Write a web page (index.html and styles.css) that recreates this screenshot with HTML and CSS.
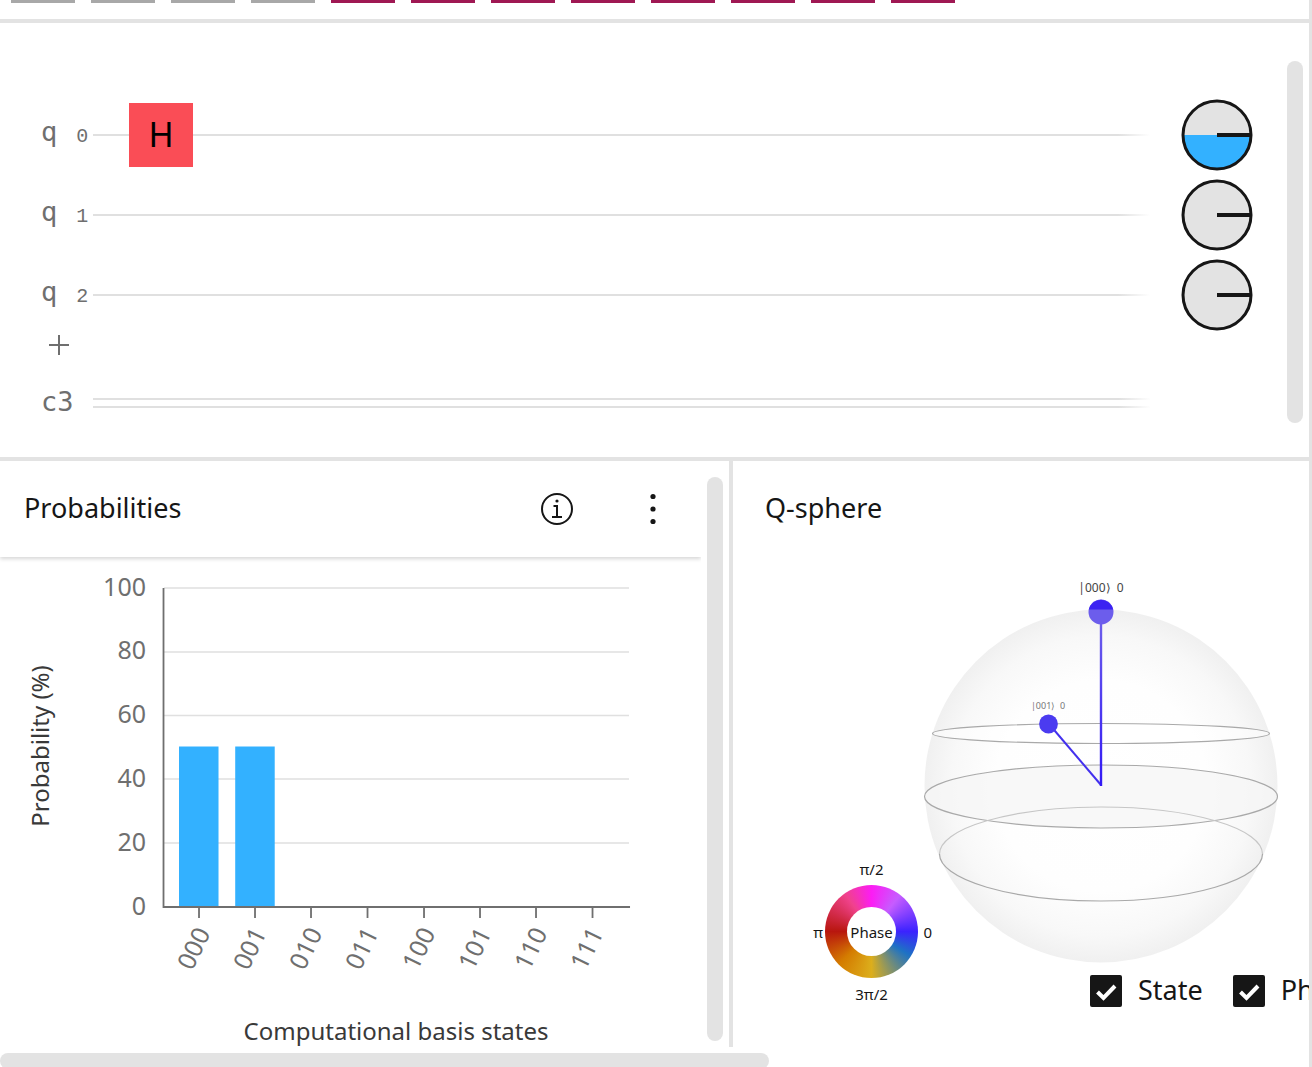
FILE: index.html
```html
<!DOCTYPE html>
<html lang="en">
<head>
<meta charset="utf-8">
<title>Quantum Composer</title>
<link rel="stylesheet" href="styles.css">
</head>
<body>
<div class="app">
  <div class="palette">
    <i class="chip"></i><i class="chip"></i><i class="chip"></i><i class="chip"></i>
    <i class="chip chip-alt"></i><i class="chip chip-alt"></i><i class="chip chip-alt"></i><i class="chip chip-alt"></i>
    <i class="chip chip-alt"></i><i class="chip chip-alt"></i><i class="chip chip-alt"></i><i class="chip chip-alt"></i>
  </div>

  <section class="circuit" aria-label="Circuit">
    <div class="registers">
      <div class="row">
        <div class="label"><span>q</span><span class="index">0</span></div>
        <div class="wire"><button class="gate" type="button">H</button></div>
        <svg class="dial" viewBox="0 0 72 72" aria-hidden="true">
          <circle cx="36" cy="36" r="34" fill="#e3e3e3"/>
          <path d="M2 36a34 34 0 0 0 68 0z" fill="#33b1ff"/>
          <circle cx="36" cy="36" r="34" fill="none" stroke="#161616" stroke-width="3"/>
          <path d="M36 36h34" stroke="#161616" stroke-width="4"/>
        </svg>
      </div>
      <div class="row">
        <div class="label"><span>q</span><span class="index">1</span></div>
        <div class="wire"></div>
        <svg class="dial" viewBox="0 0 72 72" aria-hidden="true">
          <circle cx="36" cy="36" r="34" fill="#e3e3e3" stroke="#161616" stroke-width="3"/>
          <path d="M36 36h34" stroke="#161616" stroke-width="4"/>
        </svg>
      </div>
      <div class="row">
        <div class="label"><span>q</span><span class="index">2</span></div>
        <div class="wire"></div>
        <svg class="dial" viewBox="0 0 72 72" aria-hidden="true">
          <circle cx="36" cy="36" r="34" fill="#e3e3e3" stroke="#161616" stroke-width="3"/>
          <path d="M36 36h34" stroke="#161616" stroke-width="4"/>
        </svg>
      </div>
      <button class="add" type="button" aria-label="Add qubit">
        <svg width="20" height="20" viewBox="0 0 20 20"><path d="M10 0v20M0 10h20" stroke="#6f6f6f" stroke-width="2"/></svg>
      </button>
      <div class="row">
        <div class="label">c3</div>
        <div class="wire wire-double"></div>
        <div class="dial"></div>
      </div>
    </div>
    <div class="scrollbar"></div>
  </section>

  <div class="panels">
    <section class="panel panel-left">
      <div class="view">
        <header class="panel-head panel-head-raised">
          <h2>Probabilities</h2>
          <button class="icon-button" type="button" aria-label="Information">
            <svg width="32" height="32" viewBox="0 0 32 32">
              <circle cx="16" cy="16" r="15" fill="none" stroke="#161616" stroke-width="2"/>
              <circle cx="16" cy="8" r="1.6" fill="#161616"/>
              <path d="M12.500 13h3.500v11M11 24h10" fill="none" stroke="#161616" stroke-width="2"/>
            </svg>
          </button>
          <button class="icon-button" type="button" aria-label="More options">
            <svg width="32" height="32" viewBox="0 0 32 32" fill="#161616">
              <circle cx="16" cy="3.500" r="2.600"/><circle cx="16" cy="16" r="2.600"/><circle cx="16" cy="28.500" r="2.600"/>
            </svg>
          </button>
        </header>
        <svg class="chart" viewBox="0 0 701 490" role="img" aria-label="Probability of each computational basis state">
          <path d="M164 31h465M164 95h465M164 158.500h465M164 222h465M164 286h465" stroke="#e0e0e0" stroke-width="1.500"/>
          <g fill="#33b1ff">
            <rect x="179" y="189.500" width="39.500" height="160"/>
            <rect x="235.200" y="189.500" width="39.500" height="160"/>
          </g>
          <path d="M163.500 31v319H630M199 350v11M255 350v11M311 350v11M367.500 350v11M424 350v11M480 350v11M536 350v11M592.500 350v11" fill="none" stroke="#6f6f6f" stroke-width="1.800"/>
          <g class="tick-text" text-anchor="end">
            <text x="146" y="39">100</text>
            <text x="146" y="102">80</text>
            <text x="146" y="166">60</text>
            <text x="146" y="230">40</text>
            <text x="146" y="294">20</text>
            <text x="146" y="358">0</text>
            <text transform="translate(211 376) rotate(-64)">000</text>
            <text transform="translate(267 376) rotate(-64)">001</text>
            <text transform="translate(323 376) rotate(-64)">010</text>
            <text transform="translate(379 376) rotate(-64)">011</text>
            <text transform="translate(436 376) rotate(-64)">100</text>
            <text transform="translate(492 376) rotate(-64)">101</text>
            <text transform="translate(548 376) rotate(-64)">110</text>
            <text transform="translate(604 376) rotate(-64)">111</text>
          </g>
          <g class="axis-text" text-anchor="middle">
            <text transform="translate(49 189) rotate(-90)">Probability (%)</text>
            <text x="396" y="483">Computational basis states</text>
          </g>
        </svg>
      </div>
      <div class="scrollbar"></div>
    </section>

    <section class="panel panel-right">
      <header class="panel-head">
        <h2>Q-sphere</h2>
      </header>
      <div class="stage">
        <svg class="sphere" width="576" height="418" viewBox="0 0 576 418" role="img" aria-label="Q-sphere">
          <defs>
            <radialGradient id="shade">
              <stop offset="0" stop-color="#fff"/>
              <stop offset=".6" stop-color="#fefefe"/>
              <stop offset=".85" stop-color="#f8f8f8"/>
              <stop offset="1" stop-color="#f0f0f0"/>
            </radialGradient>
            <linearGradient id="stem" x1="0" y1="55" x2="0" y2="229" gradientUnits="userSpaceOnUse">
              <stop offset="0" stop-color="#7062ea"/>
              <stop offset="1" stop-color="#3219f5"/>
            </linearGradient>
          </defs>
          <circle cx="368" cy="229" r="176.500" fill="url(#shade)"/>
          <g stroke-width="1.200" stroke="#a9a9a9" fill="none">
            <ellipse cx="368" cy="239.500" rx="176.500" ry="31.500" fill="#f5f5f5" fill-opacity=".75"/>
            <path d="M206.500 297a161.500 47 0 0 1 323 0" stroke="#c6c6c6"/>
            <path d="M206.500 297a161.500 47 0 0 0 323 0"/>
            <ellipse cx="368" cy="176.500" rx="168.500" ry="10" fill="#fff" fill-opacity=".5"/>
          </g>
          <path d="M316 167l52 61" stroke="#4330ee" stroke-width="2"/>
          <path d="M366.800 55h2.400v174h-2.400z" fill="url(#stem)"/>
          <circle cx="368" cy="55" r="12.500" fill="#6c5dec"/>
          <path d="M355.800 52.500a12.500 12.500 0 0 1 24.400 0z" fill="#3b22f2"/>
          <circle cx="315.500" cy="167" r="9.400" fill="#4b3bf0"/>
          <g text-anchor="middle">
            <text class="ket" x="368" y="35">|000⟩&#160; 0</text>
            <text class="ket ket-far" x="315" y="152">|001⟩&#160; 0</text>
          </g>
        </svg>
        <div class="phase">
          <span class="phase-top">π/2</span>
          <span class="phase-left">π</span>
          <span class="phase-ring"><span class="phase-hole">Phase</span></span>
          <span class="phase-right">0</span>
          <span class="phase-bottom">3π/2</span>
        </div>
      </div>
      <div class="options">
        <label><input type="checkbox" checked>State</label>
        <label><input type="checkbox" checked>Phase angle</label>
      </div>
    </section>
  </div>

  <div class="track"><div class="thumb"></div></div>
</div>
</body>
</html>
```
FILE: styles.css
```css
* { box-sizing: border-box; }

body {
  margin: 0;
  background: #fff;
  color: #161616;
  font-family: "Noto Sans", "Open Sans", sans-serif;
  font-size: 27px;
}

button {
  border: 0;
  padding: 0;
  background: none;
  color: inherit;
  font: inherit;
}

h2 {
  margin: 0;
  font-size: 27px;
  font-weight: 400;
}

.app {
  display: flex;
  flex-direction: column;
  height: 100vh;
  overflow: hidden;
  border-right: 3px solid #e3e3e3;
}

/* Gate palette strip */
.palette {
  display: flex;
  gap: 16px;
  height: 19px;
  padding-left: 11px;
  flex: none;
}
.chip {
  flex: none;
  width: 64px;
  height: 3px;
  background: #a8a8a8;
}
.chip-alt { background: #9f1853; }

.scrollbar {
  flex: none;
  width: 16px;
  border-radius: 8px;
  background: #e3e3e3;
}

/* Circuit */
.circuit {
  display: flex;
  flex: none;
  border-top: 4px solid #e3e3e3;
  border-bottom: 4px solid #e3e3e3;
}
.circuit .scrollbar { margin: 38px 6px 34px 0; }
.registers {
  flex: 1;
  min-width: 0;
  padding: 72px 34px 14px 0;
}
.row {
  display: flex;
  align-items: center;
  height: 80px;
}
.label {
  display: flex;
  flex: none;
  gap: 19px;
  width: 93px;
  padding: 0 0 2px 41px;
  color: #6f6f6f;
  font-family: "DejaVu Sans Mono", monospace;
  font-size: 27px;
  line-height: 32px;
}
.index {
  padding-top: 5px;
  font-family: "Liberation Mono", monospace;
  font-size: 20px;
}
.wire {
  display: flex;
  flex: 1;
  align-items: center;
  height: 64px;
  padding-left: 36px;
  background: linear-gradient(90deg, #e0e0e0, #e0e0e0 calc(100% - 32px), #fff) center / 100% 2px no-repeat;
}
.wire-double {
  height: 10px;
  border: 2px solid;
  border-width: 2px 0;
  border-image: linear-gradient(90deg, #e0e0e0, #e0e0e0 calc(100% - 32px), #fff) 1;
  border-image-width: 2px 0;
  background: none;
}
.dial {
  flex: none;
  width: 72px;
  height: 72px;
  margin-left: 31px;
}
.gate {
  width: 64px;
  height: 64px;
  padding-bottom: 2px;
  background: #fa4d56;
  color: #000;
  font-size: 34px;
  line-height: 62px;
}
.add {
  display: block;
  height: 20px;
  margin: 0 0 8px 49px;
}
.add svg { display: block; }

/* Result panels */
.panels {
  display: grid;
  grid-template-columns: 56% minmax(0, 1fr);
  flex: 1;
  min-height: 0;
}
.panel {
  min-width: 0;
  overflow: hidden;
}
.panel-left {
  display: flex;
  gap: 6px;
  padding-right: 6px;
  border-right: 4px solid #e3e3e3;
}
.panel-left .scrollbar { margin: 16px 0 6px; }
.view {
  flex: 1;
  min-width: 0;
}
.panel-head {
  display: flex;
  align-items: center;
  height: 96px;
  padding-left: 32px;
}
.panel-head-raised {
  padding-left: 24px;
  box-shadow: 0 2px 4px rgba(0, 0, 0, .16);
  clip-path: inset(0 0 -8px);
}
.panel-head h2 {
  flex: 1;
  padding-bottom: 4px;
}
.icon-button {
  width: 96px;
  height: 96px;
}
.icon-button svg {
  display: block;
  margin: auto;
}

.chart {
  display: block;
  width: 100%;
}
.tick-text {
  fill: #6f6f6f;
  font-size: 25px;
}
.axis-text {
  fill: #393939;
  font-size: 24px;
}

/* Q-sphere */
.stage { position: relative; }
.sphere { display: block; }
.ket {
  fill: #444;
  font-size: 12px;
}
.ket-far {
  fill: #777;
  font-size: 9px;
}
.phase {
  position: absolute;
  left: 78px;
  top: 306px;
  display: grid;
  grid-template-columns: 14px 93px 14px;
  grid-template-rows: 22px 93px 32px;
  align-items: center;
  justify-items: center;
  font-size: 15px;
  line-height: 18px;
}
.phase-top {
  grid-column: 2;
  align-self: start;
  line-height: 12px;
}
.phase-left { grid-area: 2 / 1; }
.phase-ring {
  grid-area: 2 / 2;
  display: grid;
  place-items: center;
  width: 93px;
  height: 93px;
  border-radius: 50%;
  background: conic-gradient(#fc1cf4, #c65cff 38deg, #3b22ff 90deg, #1e72c4 122deg, #dcae1c 180deg, #d47c00 225deg, #b8160e 270deg, #f0428c 325deg, #fc1cf4);
}
.phase-hole {
  display: grid;
  place-items: center;
  width: 49px;
  height: 49px;
  border-radius: 50%;
  background: #fff;
}
.phase-right {
  grid-area: 2 / 3;
  justify-self: end;
}
.phase-bottom { grid-area: 3 / 2; }

.options {
  display: flex;
  gap: 30px;
  padding-left: 357px;
  line-height: 30px;
  white-space: nowrap;
}
.options label {
  display: flex;
  gap: 16px;
}
.options input {
  appearance: none;
  flex: none;
  width: 32px;
  height: 32px;
  margin: 0;
  border-radius: 2px;
  background: #161616 url("data:image/svg+xml,%3Csvg xmlns='http://www.w3.org/2000/svg' viewBox='0 0 32 32'%3E%3Cpath d='M7.500 17l6 6L25 11' fill='none' stroke='%23fff' stroke-width='4'/%3E%3C/svg%3E");
}

/* Page scrollbar */
.track {
  flex: none;
  height: 20px;
  padding-top: 6px;
  overflow: hidden;
}
.thumb {
  width: 769px;
  max-width: 100%;
  height: 16px;
  border-radius: 8px;
  background: #e3e3e3;
}
```
